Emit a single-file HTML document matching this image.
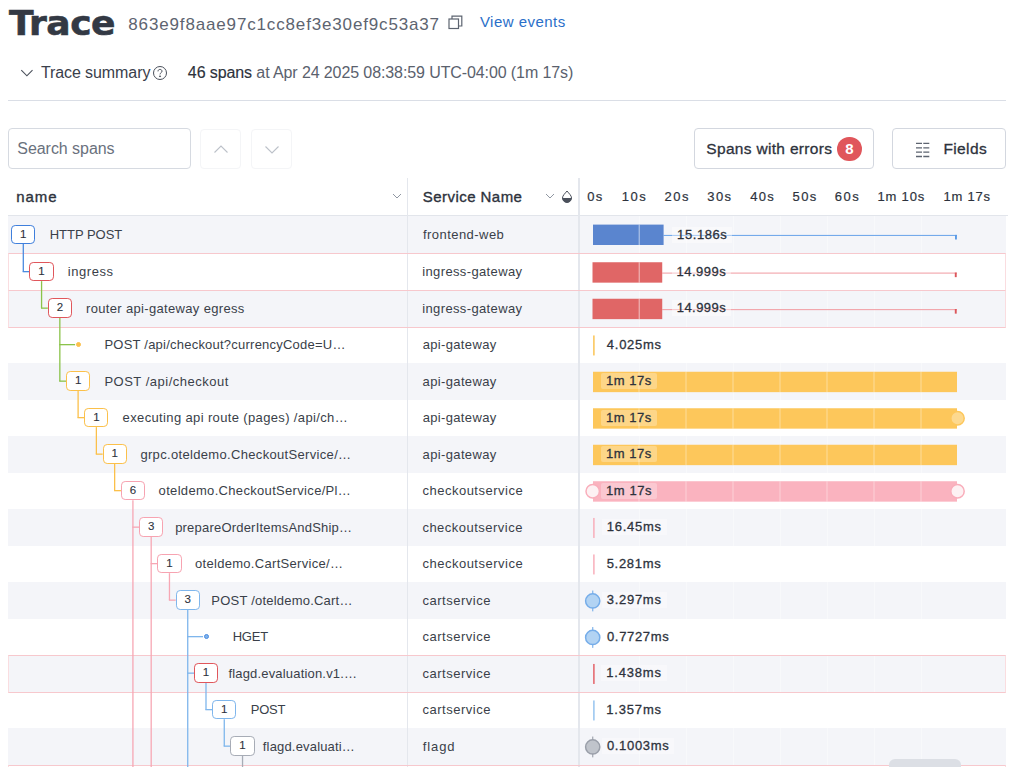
<!DOCTYPE html>
<html lang="en"><head><meta charset="utf-8"><title>Trace</title>
<style>
*{box-sizing:border-box}
html,body{margin:0;padding:0;background:#fff}
body{width:1024px;height:767px;overflow:hidden;position:relative;font-family:"Liberation Sans",Arial,sans-serif;color:#2d323c}
.abs{position:absolute}
h1{position:absolute;left:9.2px;top:1px;margin:0;font-family:"DejaVu Sans","Liberation Sans",sans-serif;font-size:34.5px;line-height:44px;font-weight:bold;color:#333944;transform-origin:0 50%;transform:scaleX(1.045);letter-spacing:-.5px;-webkit-text-stroke:.6px #333944;white-space:nowrap}
.tid{left:129px;top:13.5px;font-size:17px;line-height:22px;color:#5d6470;white-space:nowrap;transform-origin:0 50%}
.view{left:480px;top:11px;font-size:15px;line-height:22px;color:#2a6fc9;white-space:nowrap;transform-origin:0 50%}
.sum{top:62px;font-size:16px;line-height:22px;white-space:nowrap;color:#3a404b;transform-origin:0 50%}
.hr{left:8px;top:99.6px;width:998px;height:1.2px;background:#dadee6}
.inp{left:8.3px;top:128.2px;width:182.5px;height:41px;border:1px solid #d6dae1;border-radius:4px;background:#fff;font-size:16px;line-height:39px;color:#6a717d;white-space:nowrap}
.nb{top:128.5px;width:41px;height:40.5px;border:1px solid #f4f5f7;border-radius:4px;background:#fff}
.btn{top:128.4px;height:41px;border:1px solid #d3d7df;border-radius:4px;background:#fff;font-size:15.5px;line-height:40px;color:#2d323c;white-space:nowrap;-webkit-text-stroke:.3px #2d323c}
.th{top:185.8px;font-size:15px;line-height:22px;color:#2d323c;white-space:nowrap;-webkit-text-stroke:.35px #2d323c}
.tl{top:186px;font-size:13px;line-height:22px;color:#2d323c;white-space:nowrap;-webkit-text-stroke:.2px #2d323c}
.vd{top:178px;width:1.5px;height:589px;background:#e4e7ed}
.row{left:8px;width:998px;height:36.5px}
.sh{background:#f4f5f9}
.err{border-top:1px solid #f7c8cd;border-bottom:1px solid #f7c8cd;border-left:1px solid #fadde0;border-right:1px solid #fadde0}
.bd{width:24.2px;height:19.4px;border:1.7px solid;border-radius:4.2px;background:#fff;font-size:11.5px;line-height:16.4px;text-align:center;color:#2d323c;-webkit-text-stroke:.1px #2d323c}

.nm,.sv{font-size:13px;line-height:20px;color:#3a3f49;white-space:nowrap;transform-origin:0 50%}
.lb{font-size:13px;line-height:16px;color:#2d323c;white-space:nowrap;-webkit-text-stroke:.3px #2d323c;padding:0 5px}
.gl{width:1px;background:rgba(255,255,255,.4)}
.ln{width:1.5px}
.lh{height:1.5px}
</style></head><body>

<h1 id="ttl">Trace</h1>
<div class="abs tid" id="tid" style="letter-spacing:0.846px;margin-left:-0.70px">863e9f8aae97c1cc8ef3e30ef9c53a37</div>
<svg class="abs" style="left:448px;top:15px" width="15" height="15" viewBox="0 0 15 15" fill="none" stroke="#5d6470" stroke-width="1.2"><rect x="1" y="4" width="9.5" height="9.5"/><path d="M4 4V1.2h9.8V11H10.5"/></svg>
<div class="abs view" id="view" style="letter-spacing:0.475px;margin-left:-0.11px">View events</div>
<svg class="abs" style="left:19px;top:67px" width="16" height="12" viewBox="0 0 16 12" fill="none" stroke="#4a505b" stroke-width="1.1"><path d="M2.3 3.1L7.900 8.800l5.600-5.700"/></svg>
<div class="abs sum" id="s1" style="left:41px;letter-spacing:-0.085px;margin-left:-0.14px">Trace summary</div>
<svg class="abs" style="left:152px;top:65px" width="16" height="16" viewBox="0 0 16 16" fill="none" stroke="#4a505b" stroke-width="1"><circle cx="8" cy="8" r="6.500"/><path d="M6 6.4c0-1.3.9-2 2-2s2 .7 2 1.8c0 1.5-2 1.6-2 3.200"/><circle cx="8" cy="11.3" r=".5" fill="#3a404b"/></svg>
<div class="abs sum" id="s2" style="left:188px;letter-spacing:-0.101px;margin-left:-0.16px"><span style="color:#2d323c;-webkit-text-stroke:.15px #2d323c">46 spans</span> <span style="color:#5a616d">at Apr 24 2025 08:38:59 UTC-04:00 (1m 17s)</span></div>
<div class="abs hr"></div>
<div class="abs inp"><span class="abs" id="srch" style="left:10px;top:0;letter-spacing:-0.048px;margin-left:-2.03px">Search spans</span></div>
<div class="abs nb" style="left:200px"><svg class="abs" style="left:12px;top:13px" width="16" height="12" viewBox="0 0 16 12" fill="none" stroke="#bcc1c9" stroke-width="1.1"><path d="M1.5 9.500L8 3l6.5 6.500"/></svg></div>
<div class="abs nb" style="left:251px"><svg class="abs" style="left:12px;top:14px" width="16" height="12" viewBox="0 0 16 12" fill="none" stroke="#bcc1c9" stroke-width="1.1"><path d="M1.5 2.500L8 9l6.5-6.500"/></svg></div>
<div class="abs btn" style="left:694px;width:180px;padding-left:12px"><span class="abs" id="swe" style="left:12px;top:0;transform-origin:0 50%;letter-spacing:0.311px;margin-left:-0.65px">Spans with errors</span><span class="abs" style="left:142px;top:8px;width:25px;height:24px;border-radius:12px;background:#e0565b;color:#fff;font-size:15px;line-height:24px;text-align:center;font-weight:bold;-webkit-text-stroke:0 #fff">8</span></div>
<div class="abs btn" style="left:892px;width:114px"><svg class="abs" style="left:23.3px;top:12.3px" width="15" height="16" viewBox="0 0 15 16" stroke="#5d6470" stroke-width="1.3"><path d="M0 1.400h6M7.300 1.400h6M0 5.800h6M7.300 5.800h6M0 10.200h6M7.300 10.200h6M0 14.500h6M7.300 14.500h6"/></svg><span class="abs" id="fld" style="left:51px;top:0;transform-origin:0 50%;letter-spacing:0.387px;margin-left:-0.63px">Fields</span></div>
<div class="row abs sh" style="top:215.30px;height:38.60px"></div>
<div class="row abs" style="top:253.90px;height:36.50px"></div>
<div class="row abs sh" style="top:290.40px;height:36.50px"></div>
<div class="row abs" style="top:326.90px;height:36.50px"></div>
<div class="row abs sh" style="top:363.40px;height:36.50px"></div>
<div class="row abs" style="top:399.90px;height:36.50px"></div>
<div class="row abs sh" style="top:436.40px;height:36.50px"></div>
<div class="row abs" style="top:472.90px;height:36.50px"></div>
<div class="row abs sh" style="top:509.40px;height:36.50px"></div>
<div class="row abs" style="top:545.90px;height:36.50px"></div>
<div class="row abs sh" style="top:582.40px;height:36.50px"></div>
<div class="row abs" style="top:618.90px;height:36.50px"></div>
<div class="row abs sh" style="top:655.40px;height:36.50px"></div>
<div class="row abs" style="top:691.90px;height:36.50px"></div>
<div class="row abs sh" style="top:728.40px;height:36.50px"></div>
<div class="row abs" style="top:764.90px"></div>
<div class="abs" style="left:8px;top:214.8px;width:1000px;height:1.2px;background:#e2e5eb"></div>
<div class="abs th" id="h1" style="left:16px;letter-spacing:0.959px;margin-left:0.16px">name</div>
<svg class="abs" style="left:392px;top:192px" width="10" height="8" viewBox="0 0 10 8" fill="none" stroke="#9097a2" stroke-width="1"><path d="M1 2l4 4 4-4"/></svg>
<div class="abs th" id="h2" style="left:423px;letter-spacing:0.449px;margin-left:-0.20px">Service Name</div>
<svg class="abs" style="left:545px;top:192px" width="10" height="8" viewBox="0 0 10 8" fill="none" stroke="#9097a2" stroke-width="1"><path d="M1 2l4 4 4-4"/></svg>
<svg class="abs" style="left:561px;top:190px" width="12" height="13" viewBox="0 0 12 13"><path d="M6 1C4 3.600 1.500 5.500 1.500 8a4.500 4.500 0 009 0C10.500 5.500 8 3.600 6 1z" fill="#fff" stroke="#4a505b" stroke-width="1"/><path d="M1.500 8a4.500 4.500 0 009 0z" fill="#4a505b"/></svg>
<div class="abs tl" id="tl0" style="left:588px;letter-spacing:1.351px;margin-left:-0.84px">0s</div>
<div class="abs tl" id="tl1" style="left:622px;letter-spacing:1.526px;margin-left:-0.37px">10s</div>
<div class="abs tl" id="tl2" style="left:665px;letter-spacing:1.509px;margin-left:-0.50px">20s</div>
<div class="abs tl" id="tl3" style="left:707px;letter-spacing:1.439px;margin-left:0.23px">30s</div>
<div class="abs tl" id="tl4" style="left:750px;letter-spacing:1.272px;margin-left:0.14px">40s</div>
<div class="abs tl" id="tl5" style="left:793px;letter-spacing:1.452px;margin-left:-0.51px">50s</div>
<div class="abs tl" id="tl6" style="left:835px;letter-spacing:1.522px;margin-left:-0.19px">60s</div>
<div class="abs tl" id="tl7" style="left:878px;letter-spacing:0.843px;margin-left:-0.59px">1m 10s</div>
<div class="abs tl" id="tl8" style="left:944px;letter-spacing:0.811px;margin-left:-0.59px">1m 17s</div>
<div class="abs vd" style="left:406.8px"></div>
<div class="abs vd" style="left:578.2px"></div>
<div class="abs gl" style="left:638.50px;top:215.500px;height:552px"></div>
<div class="abs gl" style="left:685.50px;top:215.500px;height:552px"></div>
<div class="abs gl" style="left:732.50px;top:215.500px;height:552px"></div>
<div class="abs gl" style="left:779.50px;top:215.500px;height:552px"></div>
<div class="abs gl" style="left:826.50px;top:215.500px;height:552px"></div>
<div class="abs gl" style="left:873.50px;top:215.500px;height:552px"></div>
<div class="abs gl" style="left:920.50px;top:215.500px;height:552px"></div>
<div class="row abs err" style="top:253.30px;height:37.80px"></div>
<div class="row abs err" style="top:289.80px;height:37.80px"></div>
<div class="row abs err" style="top:654.80px;height:37.80px"></div>
<div class="row abs err" style="top:764.90px"></div>
<svg class="abs" style="left:0;top:0" width="420" height="767" viewBox="0 0 420 767" fill="none" stroke-width="1.3"><path d="M23.30 244.10V271.65" stroke="#4a8be0"/><path d="M22.70 271.65H29.57" stroke="#4a8be0"/><path d="M41.57 281.15V308.15" stroke="#8bc34a"/><path d="M40.97 308.15H47.84" stroke="#8bc34a"/><path d="M59.84 317.65V381.15" stroke="#8bc34a"/><path d="M59.24 344.65H75.11" stroke="#8bc34a"/><path d="M59.24 381.15H66.11" stroke="#8bc34a"/><path d="M78.11 390.65V417.65" stroke="#fbc04a"/><path d="M77.51 417.65H84.38" stroke="#fbc04a"/><path d="M96.38 427.15V454.15" stroke="#fbc04a"/><path d="M95.78 454.15H102.65" stroke="#fbc04a"/><path d="M114.65 463.65V490.65" stroke="#fbc04a"/><path d="M114.05 490.65H120.92" stroke="#fbc04a"/><path d="M132.92 500.15V768.00" stroke="#f7a7b4"/><path d="M132.32 527.15H139.19" stroke="#f7a7b4"/><path d="M151.19 536.65V768.00" stroke="#f7a7b4"/><path d="M150.59 563.65H157.46" stroke="#f7a7b4"/><path d="M169.46 573.15V600.15" stroke="#f7a7b4"/><path d="M168.86 600.15H175.73" stroke="#f7a7b4"/><path d="M187.73 609.65V768.00" stroke="#7fb6ec"/><path d="M187.13 636.65H203.00" stroke="#7fb6ec"/><path d="M187.13 673.15H194.00" stroke="#7fb6ec"/><path d="M206.00 682.65V709.65" stroke="#7fb6ec"/><path d="M205.40 709.65H212.27" stroke="#7fb6ec"/><path d="M224.27 719.15V746.15" stroke="#7fb6ec"/><path d="M223.67 746.15H230.54" stroke="#7fb6ec"/><path d="M242.54 755.65V768.00" stroke="#a7acb6"/></svg>
<svg class="abs" style="left:0;top:0" width="1024" height="767" viewBox="0 0 1024 767"><rect x="663.60" y="234.90" width="293.40" height="1.10" fill="#74aaeb"/><rect x="955.00" y="234.90" width="1.90" height="4.60" fill="#5b9be6"/><rect x="593.00" y="224.60" width="70.60" height="20.40" fill="#5a85cf"/><rect x="638.70" y="224.60" width="1.00" height="20.40" fill="rgba(255,255,255,.6)"/><rect x="662.23" y="272.55" width="294.77" height="1.10" fill="#f2a3a9"/><rect x="954.80" y="272.55" width="1.90" height="4.60" fill="#dc565b"/><rect x="592.50" y="262.25" width="69.73" height="20.40" fill="#e06666"/><rect x="638.70" y="262.25" width="1.00" height="20.40" fill="rgba(255,255,255,.6)"/><rect x="662.23" y="309.05" width="294.77" height="1.10" fill="#f2a3a9"/><rect x="954.80" y="309.05" width="1.90" height="4.60" fill="#dc565b"/><rect x="592.50" y="298.75" width="69.73" height="20.40" fill="#e06666"/><rect x="638.70" y="298.75" width="1.00" height="20.40" fill="rgba(255,255,255,.6)"/><rect x="593.20" y="335.45" width="1.40" height="20.00" fill="#fbc04a"/><rect x="593.00" y="371.75" width="364.00" height="20.40" fill="#fdc75b"/><rect x="638.50" y="371.75" width="1.00" height="20.40" fill="rgba(255,255,255,.4)"/><rect x="685.50" y="371.75" width="1.00" height="20.40" fill="rgba(255,255,255,.4)"/><rect x="732.50" y="371.75" width="1.00" height="20.40" fill="rgba(255,255,255,.4)"/><rect x="779.50" y="371.75" width="1.00" height="20.40" fill="rgba(255,255,255,.4)"/><rect x="826.50" y="371.75" width="1.00" height="20.40" fill="rgba(255,255,255,.4)"/><rect x="873.50" y="371.75" width="1.00" height="20.40" fill="rgba(255,255,255,.4)"/><rect x="920.50" y="371.75" width="1.00" height="20.40" fill="rgba(255,255,255,.4)"/><rect x="593.00" y="408.25" width="364.00" height="20.40" fill="#fdc75b"/><rect x="638.50" y="408.25" width="1.00" height="20.40" fill="rgba(255,255,255,.4)"/><rect x="685.50" y="408.25" width="1.00" height="20.40" fill="rgba(255,255,255,.4)"/><rect x="732.50" y="408.25" width="1.00" height="20.40" fill="rgba(255,255,255,.4)"/><rect x="779.50" y="408.25" width="1.00" height="20.40" fill="rgba(255,255,255,.4)"/><rect x="826.50" y="408.25" width="1.00" height="20.40" fill="rgba(255,255,255,.4)"/><rect x="873.50" y="408.25" width="1.00" height="20.40" fill="rgba(255,255,255,.4)"/><rect x="920.50" y="408.25" width="1.00" height="20.40" fill="rgba(255,255,255,.4)"/><circle cx="957.50" cy="418.25" r="6.70" fill="#fdd98f" stroke="#fdc75b" stroke-width="1.5"/><rect x="593.00" y="444.75" width="364.00" height="20.40" fill="#fdc75b"/><rect x="638.50" y="444.75" width="1.00" height="20.40" fill="rgba(255,255,255,.4)"/><rect x="685.50" y="444.75" width="1.00" height="20.40" fill="rgba(255,255,255,.4)"/><rect x="732.50" y="444.75" width="1.00" height="20.40" fill="rgba(255,255,255,.4)"/><rect x="779.50" y="444.75" width="1.00" height="20.40" fill="rgba(255,255,255,.4)"/><rect x="826.50" y="444.75" width="1.00" height="20.40" fill="rgba(255,255,255,.4)"/><rect x="873.50" y="444.75" width="1.00" height="20.40" fill="rgba(255,255,255,.4)"/><rect x="920.50" y="444.75" width="1.00" height="20.40" fill="rgba(255,255,255,.4)"/><rect x="593.00" y="481.25" width="364.00" height="20.40" fill="#fab3bf"/><rect x="638.50" y="481.25" width="1.00" height="20.40" fill="rgba(255,255,255,.4)"/><rect x="685.50" y="481.25" width="1.00" height="20.40" fill="rgba(255,255,255,.4)"/><rect x="732.50" y="481.25" width="1.00" height="20.40" fill="rgba(255,255,255,.4)"/><rect x="779.50" y="481.25" width="1.00" height="20.40" fill="rgba(255,255,255,.4)"/><rect x="826.50" y="481.25" width="1.00" height="20.40" fill="rgba(255,255,255,.4)"/><rect x="873.50" y="481.25" width="1.00" height="20.40" fill="rgba(255,255,255,.4)"/><rect x="920.50" y="481.25" width="1.00" height="20.40" fill="rgba(255,255,255,.4)"/><circle cx="592.70" cy="491.25" r="6.70" fill="#fdf1f3" stroke="#f9aebb" stroke-width="1.5"/><circle cx="957.50" cy="491.25" r="6.70" fill="#fdf1f3" stroke="#f9aebb" stroke-width="1.5"/><rect x="593.20" y="517.95" width="1.40" height="20.00" fill="#f8aab6"/><rect x="593.20" y="554.45" width="1.40" height="20.00" fill="#f8aab6"/><rect x="592.20" y="590.55" width="1.10" height="20.80" fill="#76ade9"/><circle cx="592.70" cy="600.95" r="7.10" fill="#b2d3f3" stroke="#76ade9" stroke-width="1.5"/><rect x="592.20" y="627.05" width="1.10" height="20.80" fill="#76ade9"/><circle cx="592.70" cy="637.45" r="7.10" fill="#b2d3f3" stroke="#76ade9" stroke-width="1.5"/><rect x="593.20" y="663.95" width="1.40" height="20.00" fill="#e3595f"/><rect x="593.20" y="700.45" width="1.40" height="20.00" fill="#8fc0ee"/><rect x="592.20" y="736.55" width="1.10" height="20.80" fill="#9a9fa9"/><circle cx="592.70" cy="746.95" r="7.10" fill="#c0c4cb" stroke="#9a9fa9" stroke-width="1.5"/></svg>
<div class="abs bd" style="left:11.20px;top:224.80px;border-color:#3f7fdc">1</div>
<div class="abs nm" id="nm1" style="left:51px;top:225.10px;letter-spacing:-0.012px;margin-left:-1.33px">HTTP POST</div>
<div class="abs sv" id="sv1" style="left:423px;top:225.10px;letter-spacing:0.463px;margin-left:-0.14px">frontend-web</div>
<div class="abs lb" id="lb1" style="left:675.60px;top:226.60px;background:rgba(255,255,255,.42);letter-spacing:0.584px;margin-left:-3.50px">15.186s</div>
<div class="abs bd" style="left:29.47px;top:261.85px;border-color:#e0565b">1</div>
<div class="abs nm" id="nm2" style="left:69px;top:262.15px;letter-spacing:0.548px;margin-left:-1.18px">ingress</div>
<div class="abs sv" id="sv2" style="left:423px;top:262.15px;letter-spacing:0.366px;margin-left:-0.77px">ingress-gateway</div>
<div class="abs lb" id="lb2" style="left:674.73px;top:263.65px;background:rgba(255,255,255,.42);letter-spacing:0.470px;margin-left:-3.15px">14.999s</div>
<div class="abs bd" style="left:47.74px;top:298.35px;border-color:#e0565b">2</div>
<div class="abs nm" id="nm3" style="left:87px;top:298.65px;letter-spacing:0.336px;margin-left:-1.02px">router api-gateway egress</div>
<div class="abs sv" id="sv3" style="left:423px;top:298.65px;letter-spacing:0.366px;margin-left:-0.78px">ingress-gateway</div>
<div class="abs lb" id="lb3" style="left:674.73px;top:300.15px;background:rgba(255,255,255,.42);letter-spacing:0.434px;margin-left:-2.95px">14.999s</div>
<div class="abs" style="left:75.81px;top:341.95px;width:5.4px;height:5.4px;border-radius:50%;background:#fbc04a;border:1.2px solid #fbc04a"></div>
<div class="abs nm" id="nm4" style="left:105px;top:335.15px;letter-spacing:0.228px;margin-left:-0.62px">POST /api/checkout?currencyCode=U…</div>
<div class="abs sv" id="sv4" style="left:423px;top:335.15px;letter-spacing:0.351px;margin-left:-0.39px">api-gateway</div>
<div class="abs lb" id="lb4" style="left:605.00px;top:336.65px;background:rgba(255,255,255,.35);letter-spacing:0.724px;margin-left:-3.16px">4.025ms</div>
<div class="abs bd" style="left:66.01px;top:371.35px;border-color:#fbc04a">1</div>
<div class="abs nm" id="nm5" style="left:105px;top:371.65px;letter-spacing:0.501px;margin-left:-0.60px">POST /api/checkout</div>
<div class="abs sv" id="sv5" style="left:423px;top:371.65px;letter-spacing:0.358px;margin-left:-0.42px">api-gateway</div>
<div class="abs lb" id="lb5" style="left:605.00px;top:373.15px;background:rgba(255,255,255,.28);border-radius:2px;letter-spacing:0.527px;margin-left:-3.95px">1m 17s</div>
<div class="abs bd" style="left:84.28px;top:407.85px;border-color:#fbc04a">1</div>
<div class="abs nm" id="nm6" style="left:123px;top:408.15px;letter-spacing:0.361px;margin-left:-0.40px">executing api route (pages) /api/ch…</div>
<div class="abs sv" id="sv6" style="left:423px;top:408.15px;letter-spacing:0.351px;margin-left:-0.39px">api-gateway</div>
<div class="abs lb" id="lb6" style="left:605.00px;top:409.65px;background:rgba(255,255,255,.28);border-radius:2px;letter-spacing:0.527px;margin-left:-3.95px">1m 17s</div>
<div class="abs bd" style="left:102.55px;top:444.35px;border-color:#fbc04a">1</div>
<div class="abs nm" id="nm7" style="left:141px;top:444.65px;letter-spacing:0.328px;margin-left:-0.61px">grpc.oteldemo.CheckoutService/…</div>
<div class="abs sv" id="sv7" style="left:423px;top:444.65px;letter-spacing:0.358px;margin-left:-0.42px">api-gateway</div>
<div class="abs lb" id="lb7" style="left:605.00px;top:446.15px;background:rgba(255,255,255,.28);border-radius:2px;letter-spacing:0.527px;margin-left:-3.95px">1m 17s</div>
<div class="abs bd" style="left:120.82px;top:480.85px;border-color:#f7a3b1">6</div>
<div class="abs nm" id="nm8" style="left:159px;top:481.15px;letter-spacing:0.322px;margin-left:-0.42px">oteldemo.CheckoutService/Pl…</div>
<div class="abs sv" id="sv8" style="left:423px;top:481.15px;letter-spacing:0.503px;margin-left:-0.59px">checkoutservice</div>
<div class="abs lb" id="lb8" style="left:605.00px;top:482.65px;background:rgba(255,255,255,.28);border-radius:2px;letter-spacing:0.558px;margin-left:-3.95px">1m 17s</div>
<div class="abs bd" style="left:139.09px;top:517.35px;border-color:#f7a3b1">3</div>
<div class="abs nm" id="nm9" style="left:176px;top:517.65px;letter-spacing:0.206px;margin-left:-0.89px">prepareOrderItemsAndShip…</div>
<div class="abs sv" id="sv9" style="left:423px;top:517.65px;letter-spacing:0.486px;margin-left:-0.62px">checkoutservice</div>
<div class="abs lb" id="lb9" style="left:605.00px;top:519.15px;background:rgba(255,255,255,.35);letter-spacing:0.757px;margin-left:-3.34px">16.45ms</div>
<div class="abs bd" style="left:157.36px;top:553.85px;border-color:#f7a3b1">1</div>
<div class="abs nm" id="nm10" style="left:196px;top:554.15px;letter-spacing:0.304px;margin-left:-1.06px">oteldemo.CartService/…</div>
<div class="abs sv" id="sv10" style="left:423px;top:554.15px;letter-spacing:0.503px;margin-left:-0.59px">checkoutservice</div>
<div class="abs lb" id="lb10" style="left:605.00px;top:555.65px;background:rgba(255,255,255,.35);letter-spacing:0.722px;margin-left:-3.39px">5.281ms</div>
<div class="abs bd" style="left:175.63px;top:590.35px;border-color:#7fb6ec">3</div>
<div class="abs nm" id="nm11" style="left:212px;top:590.65px;letter-spacing:0.215px;margin-left:-0.73px">POST /oteldemo.Cart…</div>
<div class="abs sv" id="sv11" style="left:423px;top:590.65px;letter-spacing:0.529px;margin-left:-0.62px">cartservice</div>
<div class="abs lb" id="lb11" style="left:605.00px;top:592.15px;background:rgba(255,255,255,.35);letter-spacing:0.708px;margin-left:-3.22px">3.297ms</div>
<div class="abs" style="left:203.90px;top:634.15px;width:5.0px;height:5.0px;border-radius:50%;background:#7fb3ec;border:1.2px solid #4a8be0"></div>
<div class="abs nm" id="nm12" style="left:233px;top:627.15px;letter-spacing:-0.165px;margin-left:-0.37px">HGET</div>
<div class="abs sv" id="sv12" style="left:423px;top:627.15px;letter-spacing:0.523px;margin-left:-0.59px">cartservice</div>
<div class="abs lb" id="lb12" style="left:605.00px;top:628.65px;background:rgba(255,255,255,.35);letter-spacing:0.672px;margin-left:-3.04px">0.7727ms</div>
<div class="abs bd" style="left:193.90px;top:663.35px;border-color:#e0565b">1</div>
<div class="abs nm" id="nm13" style="left:228px;top:663.65px;letter-spacing:0.179px;margin-left:0.42px">flagd.evaluation.v1.…</div>
<div class="abs sv" id="sv13" style="left:423px;top:663.65px;letter-spacing:0.529px;margin-left:-0.62px">cartservice</div>
<div class="abs lb" id="lb13" style="left:605.00px;top:665.15px;background:rgba(255,255,255,.35);letter-spacing:0.784px;margin-left:-3.68px">1.438ms</div>
<div class="abs bd" style="left:212.17px;top:699.85px;border-color:#7fb6ec">1</div>
<div class="abs nm" id="nm14" style="left:251px;top:700.15px;letter-spacing:-0.195px;margin-left:-0.30px">POST</div>
<div class="abs sv" id="sv14" style="left:423px;top:700.15px;letter-spacing:0.523px;margin-left:-0.59px">cartservice</div>
<div class="abs lb" id="lb14" style="left:605.00px;top:701.65px;background:rgba(255,255,255,.35);letter-spacing:0.819px;margin-left:-3.75px">1.357ms</div>
<div class="abs bd" style="left:230.44px;top:736.35px;border-color:#a7acb6">1</div>
<div class="abs nm" id="nm15" style="left:263px;top:736.65px;letter-spacing:0.174px;margin-left:-0.20px">flagd.evaluati…</div>
<div class="abs sv" id="sv15" style="left:423px;top:736.65px;letter-spacing:0.869px;margin-left:-0.20px">flagd</div>
<div class="abs lb" id="lb15" style="left:605.00px;top:738.15px;background:rgba(255,255,255,.35);letter-spacing:0.662px;margin-left:-3.07px">0.1003ms</div>
<div class="abs" style="left:888.5px;top:758.5px;width:72px;height:30px;border-radius:6px;background:#dcdfe5;font-size:13px;line-height:20px;padding:3px 0 0 12px;color:#3a3f49">Service</div>
</body></html>
